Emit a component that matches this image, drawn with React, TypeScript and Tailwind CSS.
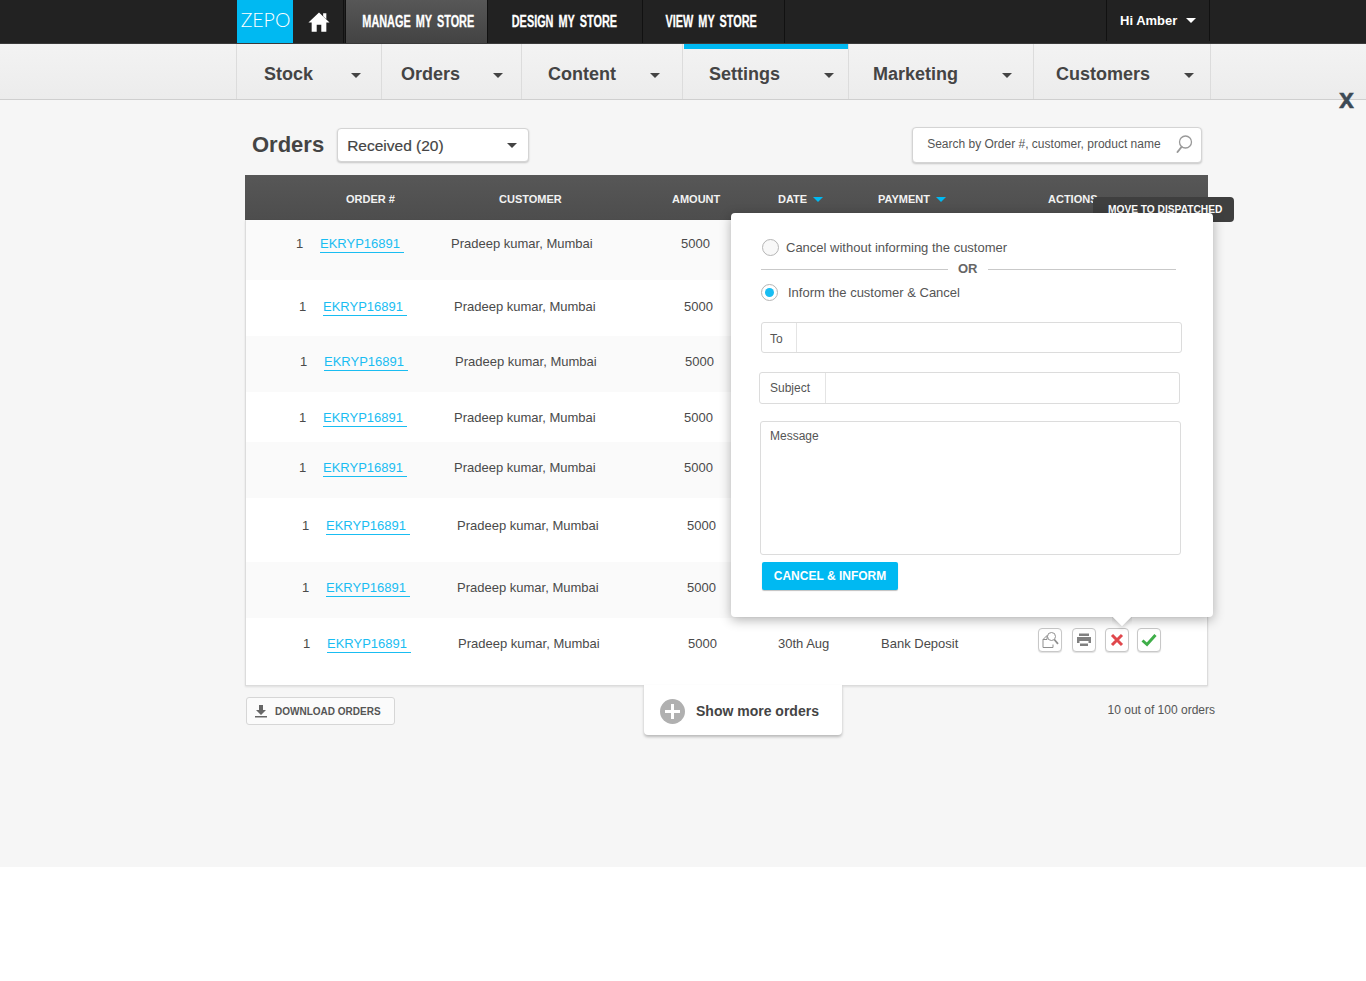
const topLinks = [
  { label: 'MANAGE MY STORE', cls: 'w-[143px] pl-[3px] bg-gradient-to-b from-[#575757] to-[#434343] border-l border-r border-[#111] ml-[1px]' },
  { label: 'DESIGN MY STORE', cls: 'w-[154px] pr-[3px] border-r border-[#111] ml-[1px]' },
  { label: 'VIEW MY STORE', cls: 'w-[142px] pr-[4px] border-r border-[#111]' },
]

const menus = [
  { label: 'Stock', cls: 'w-[146px] pl-[27px] pr-[20px]' },
  { label: 'Orders', cls: 'w-[140px] pl-[19px] pr-[18px]' },
  { label: 'Content', cls: 'w-[161px] pl-[26px] pr-[22px]' },
  { label: 'Settings', cls: 'w-[166px] pl-[26px] pr-[14px]', active: true },
  { label: 'Marketing', cls: 'w-[185px] pl-[24px] pr-[21px]' },
  { label: 'Customers', cls: 'w-[177px] pl-[22px] pr-[16px]' },
]

const rows = [
  { cls: 'h-[60px] pt-[16px] pl-[50px] bg-[#fafafa]' },
  { cls: 'h-[56px] pt-[19px] pl-[53px] bg-white' },
  { cls: 'h-[56px] pt-[18px] pl-[54px] bg-[#fafafa]' },
  { cls: 'h-[50px] pt-[18px] pl-[53px] bg-white' },
  { cls: 'h-[56px] pt-[18px] pl-[53px] bg-[#fafafa]' },
  { cls: 'h-[64px] pt-[20px] pl-[56px] bg-white' },
  { cls: 'h-[56px] pt-[18px] pl-[56px] bg-[#fafafa]' },
  { cls: 'h-[67px] pt-[18px] pl-[57px] bg-white', last: true },
]

function Caret({ className }: { className: string }) {
  return <span className={`inline-block w-0 h-0 border-x-[5px] border-x-transparent border-t-[5px] ${className}`} />
}

function RowActions() {
  const box = 'w-[24px] h-[24px] flex items-center justify-center rounded-[4px] border border-[#c8c8c8] bg-white shadow-[0_1px_1px_rgba(0,0,0,0.12)]'
  return (
    <div className="flex -mt-[8px]">
      <span className={box}>
        <svg width="20" height="20" viewBox="0 0 20 20" fill="none" stroke="#8f8f8f" strokeWidth="1">
          <path d="M7 5.5 3 9.5v8h10v-3" />
          <path d="M3 9.5h4v-4" />
          <circle cx="11.5" cy="6.5" r="4" />
          <path d="m14.3 9.5 3.7 4.3" strokeWidth="1.8" />
        </svg>
      </span>
      <span className={`${box} ml-[10px]`}>
        <svg width="16" height="16" viewBox="0 0 16 16" fill="#808080">
          <path d="M3 1.5h10V4H3z" />
          <path d="M1 5h14v6h-2.5V9h-9v2H1z" />
          <path d="M4 11.5h8V14H4z" />
        </svg>
      </span>
      <span className={`${box} ml-[9px]`}>
        <svg width="14" height="14" viewBox="0 0 14 14" stroke="#e0474c" strokeWidth="3">
          <path d="m2 2 10 10M12 2 2 12" />
        </svg>
      </span>
      <span className={`${box} ml-[8px]`}>
        <svg width="16" height="14" viewBox="0 0 16 14" fill="none" stroke="#3fae49" strokeWidth="3">
          <path d="m1.5 7.5 4.5 4 8.5-9.5" />
        </svg>
      </span>
    </div>
  )
}

function Field({ label, cls, labelCls }: { label: string; cls: string; labelCls: string }) {
  return (
    <div className={`flex border border-[#dcdcdc] rounded-[3px] text-[12px] text-[#555] ${cls}`}>
      <span className={`flex items-center pl-[8px] border-r border-[#e4e4e4] ${labelCls}`}>{label}</span>
    </div>
  )
}

export default function App() {
  return (
    <div className="min-h-[981px] bg-white text-[#444] font-['Liberation_Sans',Arial,sans-serif]">
      <div className="relative h-[867px] bg-[#f6f6f6]">
        {/* top bar */}
        <div className="h-[44px] bg-[#222] border-b border-[#3a3a3a] pl-[237px] flex">
          <div className="w-[56px] h-[43px] pb-[4px] pl-[1px] bg-[#00b9f2] flex items-center justify-center text-white text-[19.5px] font-light font-['Lato',sans-serif]">
            ZEPO
          </div>
          <div className="w-[51px] h-[43px] pl-[2px] flex items-center justify-center border-r border-[#111]">
            <svg width="22" height="22" viewBox="0 0 24 24" fill="#fff">
              <path d="M12 1.5 23.5 12.5H20V22.5H14.5V15H9.5V22.5H4V12.5H.5Z" />
              <path d="M16.5 2.5h3.5v6.5l-3.5-3.3z" />
            </svg>
          </div>
          {topLinks.map((l) => (
            <div
              key={l.label}
              className={`h-[43px] flex items-center justify-center text-white text-[16px] font-bold whitespace-nowrap ${l.cls}`}
            >
              <span className="inline-block scale-x-[0.68] [word-spacing:3px] [-webkit-text-stroke:0.3px_#fff]">{l.label}</span>
            </div>
          ))}
          <div className="ml-[321px] w-[104px] h-[41px] border-x border-[#111] flex items-center pl-[13px] text-white text-[13px] font-bold">
            Hi Amber
            <Caret className="ml-[9px] border-t-white" />
          </div>
        </div>

        {/* second nav */}
        <div className="h-[56px] bg-gradient-to-b from-[#f3f3f3] to-[#ececec] border-b border-[#cfcfcf] pl-[236px] flex">
          {menus.map((m, i) => (
            <div
              key={m.label}
              className={`relative h-[55px] flex items-center justify-between border-r border-[#dcdcdc] text-[18px] font-bold text-[#444] ${i === 0 ? 'border-l' : ''} ${m.cls}`}
            >
              {m.active && <span className="absolute left-[1px] right-0 top-0 h-[5px] bg-[#00b9f2]" />}
              <span className="mt-[6px]">{m.label}</span>
              <Caret className="mt-[8px] border-t-[#444]" />
            </div>
          ))}
        </div>
        <span className="absolute left-[1339px] top-[86px] text-[27px] leading-[27px] font-bold text-[#3d4a55] [-webkit-text-stroke:0.4px_#3d4a55]">x</span>

        {/* title row */}
        <div className="pl-[252px] pt-[27px] flex items-start">
          <h1 className="mt-[5px] text-[22px] leading-[26px] font-bold text-[#444]">Orders</h1>
          <div className="ml-[13px] mt-[1px] w-[192px] h-[34px] pt-[2px] flex items-center justify-between pl-[9px] pr-[11px] bg-white border border-[#d4d4d4] rounded-[4px] shadow-[0_1px_2px_rgba(0,0,0,0.2)] text-[15.5px] text-[#444] [-webkit-text-stroke:0.2px_#444]">
            Received (20)
            <Caret className="-mt-[2px] border-t-[#444]" />
          </div>
          <div className="ml-[383px] w-[290px] h-[36px] pb-[2px] flex items-center justify-between pl-[14px] pr-[8px] bg-white border border-[#d4d4d4] rounded-[4px] shadow-[0_1px_2px_rgba(0,0,0,0.2)] text-[12px] text-[#555]">
            Search by Order #, customer, product name
            <svg width="18" height="20" viewBox="0 0 18 20" fill="none" stroke="#999" strokeWidth="1.3">
              <circle cx="10.5" cy="8" r="6" />
              <path d="M6.5 13 2.5 18" strokeWidth="2" strokeLinecap="round" />
            </svg>
          </div>
        </div>

        {/* table */}
        <div className="relative ml-[245px] mt-[12px] w-[963px]">
          <div className="h-[45px] pt-[3px] pl-[101px] bg-gradient-to-b from-[#575757] to-[#4d4d4d] grid grid-cols-[153px_173px_106px_100px_170px_1fr] items-center text-[11px] font-bold text-[#f2f2f2]">
            <span>ORDER #</span>
            <span>CUSTOMER</span>
            <span>AMOUNT</span>
            <span className="flex items-center">
              DATE
              <Caret className="ml-[6px] border-x-[4px] border-t-[4px] border-t-[#00b9f2]" />
            </span>
            <span className="flex items-center">
              PAYMENT
              <Caret className="ml-[6px] border-x-[4px] border-t-[4px] border-t-[#00b9f2]" />
            </span>
            <span>ACTIONS</span>
          </div>
          <div className="bg-white border-x border-b border-[#dcdcdc] shadow-[0_1px_2px_rgba(0,0,0,0.1)] text-[13px] leading-[16px] text-[#4a4a4a]">
            {rows.map((r, i) => (
              <div key={i} className={`flex items-start whitespace-nowrap ${r.cls}`}>
                <span className="w-[24px]">1</span>
                <a className="w-[131px]">
                  <span className="inline-block w-[84px] border-b border-[#19bdf2] text-[#19bdf2]">EKRYP16891</span>
                </a>
                <span className="w-[230px]">Pradeep kumar, Mumbai</span>
                <span className="w-[90px]">5000</span>
                {r.last && (
                  <>
                    <span className="w-[103px]">30th Aug</span>
                    <span className="w-[157px]">Bank Deposit</span>
                    <RowActions />
                  </>
                )}
              </div>
            ))}
          </div>

          {/* tooltip behind the popup */}
          <div className="absolute left-[848px] top-[22px] w-[141px] h-[25px] rounded-[4px] bg-[#3f3f3f] text-white text-[10.2px] font-bold leading-[25px] pl-[15px]">
            MOVE TO DISPATCHED
          </div>

          {/* cancel popup */}
          <div className="absolute left-[486px] top-[38px] w-[482px] h-[404px] bg-white rounded-[4px] shadow-[0_3px_12px_rgba(0,0,0,0.3)] text-[13px] text-[#555]">
            <span className="absolute left-[381px] top-[403px] w-[20px] h-[20px] overflow-hidden">
              <span className="block w-[16px] h-[16px] bg-white rotate-45 -mt-[9px] ml-[2px] shadow-[2px_2px_4px_rgba(0,0,0,0.12)]" />
            </span>
            <div className="flex items-center pl-[31px] pt-[26px]">
              <span className="w-[17px] h-[17px] rounded-full border border-[#b5b5b5] bg-[#f8f8f8]" />
              <span className="ml-[7px] leading-[17px]">Cancel without informing the customer</span>
            </div>
            <div className="flex items-center pl-[30px] pr-[37px] mt-[5px] h-[16px]">
              <span className="w-[187px] h-px bg-[#c9c9c9]" />
              <span className="mx-[10px] font-bold text-[#666]">OR</span>
              <span className="flex-1 h-px bg-[#c9c9c9]" />
            </div>
            <div className="flex items-center pl-[30px] mt-[7px]">
              <span className="w-[17px] h-[17px] rounded-full border border-[#b5b5b5] bg-white flex items-center justify-center">
                <span className="w-[9px] h-[9px] rounded-full bg-[#19bdf2]" />
              </span>
              <span className="ml-[10px] leading-[17px]">Inform the customer &amp; Cancel</span>
            </div>
            <Field label="To" cls="ml-[30px] mt-[21px] w-[421px] h-[31px]" labelCls="w-[35px] pt-[3px]" />
            <Field label="Subject" cls="ml-[28px] mt-[19px] w-[421px] h-[32px] pl-[2px]" labelCls="w-[64px]" />
            <div className="ml-[29px] mt-[17px] w-[421px] h-[134px] border border-[#dcdcdc] rounded-[3px] pl-[9px] pt-[5px] text-[12px] text-[#555]">
              Message
            </div>
            <div className="ml-[31px] mt-[7px] w-[136px] h-[28px] rounded-[2px] bg-[#00b9f2] shadow-[0_1px_1px_rgba(0,0,0,0.25)] flex items-center justify-center text-white text-[12px] font-bold">
              CANCEL &amp; INFORM
            </div>
          </div>
        </div>

        {/* footer of table */}
        <div className="relative ml-[246px] w-[969px] flex items-start">
          <div className="mt-[11px] w-[149px] h-[28px] flex items-center pl-[7px] bg-[#fbfbfb] border border-[#d6d6d6] rounded-[3px] text-[10px] font-bold text-[#555]">
            <svg width="14" height="14" viewBox="0 0 14 14" fill="#666">
              <path d="M5 1h4v5h3L7 11 2 6h3z" />
              <path d="M1 12h12v1.5H1z" />
            </svg>
            <span className="ml-[7px]">DOWNLOAD ORDERS</span>
          </div>
          <div className="-mt-[1px] ml-[249px] w-[198px] h-[50px] pt-[2px] flex items-center pl-[16px] bg-white rounded-b-[4px] shadow-[0_2px_3px_rgba(0,0,0,0.25)] text-[14px] font-bold text-[#444]">
            <span className="w-[25px] h-[25px] rounded-full bg-[#b0b0b0] relative">
              <span className="absolute left-[5px] top-[11px] w-[15px] h-[3px] bg-white" />
              <span className="absolute left-[11px] top-[5px] w-[3px] h-[15px] bg-white" />
            </span>
            <span className="ml-[11px]">Show more orders</span>
          </div>
          <span className="ml-auto mt-[15px] text-[12px] text-[#555]">10 out of 100 orders</span>
        </div>
      </div>
    </div>
  )
}
